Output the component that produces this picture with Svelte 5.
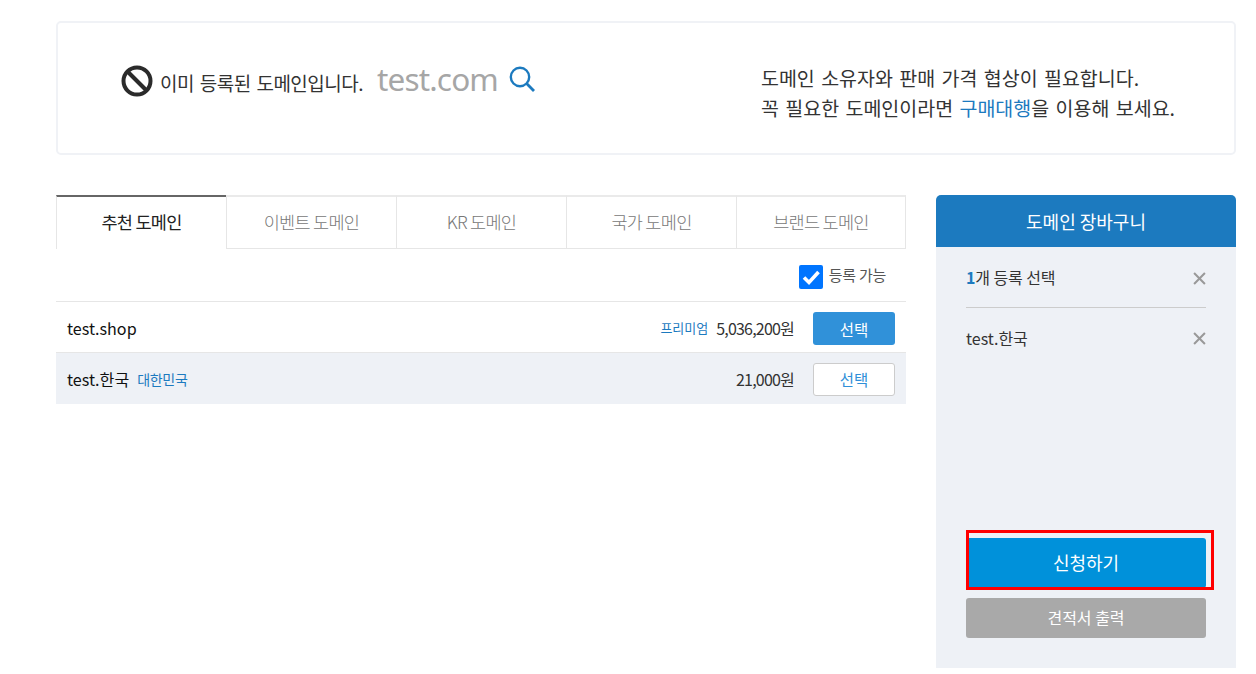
<script>
  const tabs = ['추천 도메인', '이벤트 도메인', 'KR 도메인', '국가 도메인', '브랜드 도메인'];
</script>

<div class="page">
  <section class="notice">
    <div class="status">
      <svg class="ban" viewBox="0 0 32 32" width="32" height="32" aria-hidden="true">
        <circle cx="16" cy="16" r="13.5" fill="none" stroke="#2b2b2b" stroke-width="4" />
        <path d="M7 7 L25 25" stroke="#2b2b2b" stroke-width="4" />
      </svg>
      <span class="msg">이미 등록된 도메인입니다.</span>
      <span class="domain">test.com</span>
      <svg class="search" viewBox="0 0 28 28" width="28" height="28" aria-hidden="true">
        <circle cx="12" cy="12" r="9.2" fill="none" stroke="#1c7abf" stroke-width="2.4" />
        <path d="M18.6 18.6 L26 26" stroke="#1c7abf" stroke-width="2.8" />
      </svg>
    </div>
    <p class="advice">
      도메인 소유자와 판매 가격 협상이 필요합니다.<br />
      꼭 필요한 도메인이라면 <span class="link">구매대행</span>을 이용해 보세요.
    </p>
  </section>

  <div class="main">
    <div class="results">
      <ul class="tabs">
        {#each tabs as tab, i}
          <li class:active={i === 0}>{tab}</li>
        {/each}
      </ul>
      <div class="filter">
        <label>
          <span class="check">
            <svg viewBox="0 0 24 24" width="24" height="24" aria-hidden="true">
              <rect width="24" height="24" rx="2" fill="#0075ff" />
              <path d="M5 12.5 L10 17.5 L19.5 7" fill="none" stroke="#fff" stroke-width="3.6" />
            </svg>
          </span>
          <span>등록 가능</span>
        </label>
      </div>
      <div class="row">
        <span class="name">test.shop</span>
        <span class="tag premium">프리미엄</span>
        <span class="price">5,036,200원</span>
        <button class="pick solid">선택</button>
      </div>
      <div class="row selected">
        <span class="name">test.한국</span>
        <span class="tag">대한민국</span>
        <span class="price">21,000원</span>
        <button class="pick outline">선택</button>
      </div>
    </div>

    <aside class="cart">
      <h2>도메인 장바구니</h2>
      <div class="cart-body">
        <div class="cart-line head">
          <span><b>1</b>개 등록 선택</span>
          <svg viewBox="0 0 12 12" width="13" height="13" aria-hidden="true"><path d="M1 1 L11 11 M11 1 L1 11" stroke="#999" stroke-width="1.9" /></svg>
        </div>
        <div class="cart-line item">
          <span>test.한국</span>
          <svg viewBox="0 0 12 12" width="13" height="13" aria-hidden="true"><path d="M1 1 L11 11 M11 1 L1 11" stroke="#999" stroke-width="1.9" /></svg>
        </div>
        <div class="actions">
          <div class="apply-wrap">
            <button class="apply">신청하기</button>
            <span class="highlight"></span>
          </div>
          <button class="quote">견적서 출력</button>
        </div>
      </div>
    </aside>
  </div>
</div>

<style>
  :global(body) {
    margin: 0;
    background: #fff;
    font-family: "Noto Sans CJK KR", "Noto Sans", sans-serif;
    color: #333;
  }
  .page {
    width: 1180px;
    margin-left: 56px;
    padding-top: 21px;
  }
  .notice {
    box-sizing: border-box;
    height: 134px;
    border: 2px solid #f0f2f6;
    border-radius: 5px;
    display: flex;
    align-items: center;
    justify-content: space-between;
    padding: 0 59px 0 63px;
  }
  .status {
    display: flex;
    align-items: center;
    margin-top: -14px;
  }
  .ban { margin-right: 7px; }
  .msg {
    font-size: 19px;
    letter-spacing: -0.5px;
    word-spacing: 2px;
    margin-right: 14px;
    margin-top: 2px;
  }
  .domain {
    font-family: "Noto Sans", sans-serif;
    font-size: 31.5px;
    line-height: 40px;
    letter-spacing: -0.85px;
    color: #a6a6a6;
    margin-right: 10px;
    margin-top: -4px;
  }
  .search { margin-top: -4px; }
  .advice {
    margin: 10px 0 0;
    font-size: 19.5px;
    line-height: 30px;
    word-spacing: 2px;
  }
  .link { color: #1c7abf; }
  .main {
    display: grid;
    grid-template-columns: 850px 300px;
    column-gap: 30px;
    margin-top: 40px;
  }
  .tabs {
    list-style: none;
    margin: 0;
    padding: 0;
    display: grid;
    grid-template-columns: repeat(5, 170px);
  }
  .tabs li {
    box-sizing: border-box;
    height: 54px;
    padding-bottom: 3px;
    border-top: 2px solid #eaeaea;
    border-left: 1px solid #e6e6e6;
    border-bottom: 1px solid #e6e6e6;
    display: flex;
    align-items: center;
    justify-content: center;
    font-size: 17.5px;
    font-weight: 300;
    letter-spacing: -0.7px;
    color: #777;
  }
  .tabs li:last-child { border-right: 1px solid #e6e6e6; }
  .tabs li.active {
    border-top-color: #666;
    border-bottom: 0;
    color: #222;
    font-weight: 400;
  }
  .filter {
    box-sizing: border-box;
    height: 52px;
    display: flex;
    align-items: center;
    justify-content: flex-end;
    padding-right: 20px;
    font-size: 15px;
    letter-spacing: -0.25px;
    color: #555;
  }
  .filter label {
    display: flex;
    align-items: center;
    gap: 6px;
  }
  .filter label > span:last-child { margin-bottom: 1px; }
  .check { display: flex; margin-top: 3px; }
  .row {
    box-sizing: border-box;
    height: 51px;
    border-top: 1px solid #e6e6e6;
    display: flex;
    align-items: center;
    padding: 1px 11px 0;
  }
  .row.selected { background: #eef1f6; height: 52px; }
  .name {
    font-size: 16.1px;
    color: #111;
    margin-right: 8px;
  }
  .tag {
    font-size: 14px;
    color: #1c7abf;
    letter-spacing: -0.3px;
  }
  .tag.premium {
    font-size: 13px;
    margin-left: auto;
    margin-right: 8px;
    letter-spacing: 0;
  }
  .selected .tag { margin-right: auto; }
  .price {
    font-size: 16px;
    letter-spacing: -0.8px;
    color: #333;
    margin-right: 19px;
  }
  .pick {
    box-sizing: border-box;
    width: 82px;
    height: 33px;
    border-radius: 3px;
    font: inherit;
    font-size: 15.5px;
    padding: 0;
  }
  .solid { background: #3091d9; color: #fff; border: 0; margin-top: 2px; }
  .outline { background: #fff; color: #2f8fd8; border: 1px solid #ccc; }
  .cart {
    height: 473px;
    display: flex;
    flex-direction: column;
  }
  h2 {
    margin: 0;
    height: 52px;
    background: #1c7abf;
    border-radius: 5px 5px 0 0;
    color: #fff;
    font-size: 18px;
    font-weight: 400;
    display: flex;
    align-items: center;
    justify-content: center;
  }
  .cart-body {
    flex: 1;
    background: #eef1f6;
    padding: 0 30px;
    display: flex;
    flex-direction: column;
  }
  .cart-line {
    display: flex;
    align-items: center;
    justify-content: space-between;
    font-size: 16px;
    color: #333;
  }
  .head {
    height: 60px;
    border-bottom: 1px solid #ccc;
    letter-spacing: -0.1px;
  }
  .head svg { margin-top: 3px; }
  .head b { color: #1c7abf; font-weight: 700; }
  .item { height: 60px; }
  .actions {
    margin-top: auto;
    padding-bottom: 30px;
    display: flex;
    flex-direction: column;
    gap: 10px;
  }
  .apply-wrap { position: relative; display: flex; }
  .apply, .quote {
    width: 240px;
    border: 0;
    border-radius: 3px;
    color: #fff;
    font: inherit;
    padding: 0 0 2px;
  }
  .apply {
    height: 50px;
    background: #0091da;
    font-size: 18px;
  }
  .quote {
    height: 40px;
    background: #a9a9a9;
    font-size: 16px;
  }
  .highlight {
    position: absolute;
    left: 0;
    top: -8px;
    width: 248px;
    height: 60px;
    box-sizing: border-box;
    border: 3px solid #f00;
    pointer-events: none;
  }
</style>
